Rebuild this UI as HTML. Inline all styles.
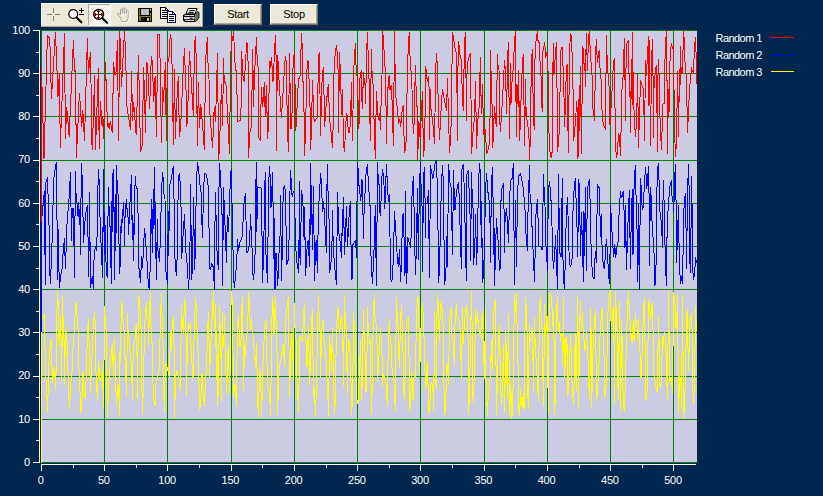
<!DOCTYPE html>
<html><head><meta charset="utf-8"><title>Plot</title>
<style>
html,body{margin:0;padding:0;}
body{width:823px;height:496px;background:#01274f;overflow:hidden;position:relative;font-family:"Liberation Sans",sans-serif;font-size:11px;}
#tb{position:absolute;left:41px;top:3px;width:162px;height:24px;background:#ece9d8;}
.btn{position:absolute;top:4px;height:21px;width:48px;box-sizing:border-box;background:#ece9d8;border-top:1px solid #fff;border-left:1px solid #fff;border-right:1px solid #716f64;border-bottom:1px solid #716f64;box-shadow:inset -1px -1px 0 #aca899;color:#000;text-align:center;line-height:18px;font-size:11px;letter-spacing:-0.3px;}
svg{position:absolute;left:0;top:0;}
svg text{font-family:"Liberation Sans",sans-serif;font-size:11px;fill:#fff;}
</style></head><body>
<svg width="823" height="496" viewBox="0 0 823 496">
<rect x="41" y="30" width="656" height="433" fill="#cbcce4"/>
<g stroke="#008000" stroke-width="1" shape-rendering="crispEdges"><line x1="41" y1="30.5" x2="697" y2="30.5"/><line x1="41" y1="73.5" x2="697" y2="73.5"/><line x1="41" y1="116.5" x2="697" y2="116.5"/><line x1="41" y1="160.5" x2="697" y2="160.5"/><line x1="41" y1="203.5" x2="697" y2="203.5"/><line x1="41" y1="246.5" x2="697" y2="246.5"/><line x1="41" y1="289.5" x2="697" y2="289.5"/><line x1="41" y1="332.5" x2="697" y2="332.5"/><line x1="41" y1="376.5" x2="697" y2="376.5"/><line x1="41" y1="419.5" x2="697" y2="419.5"/><line x1="41" y1="462.5" x2="697" y2="462.5"/><line x1="41.5" y1="30" x2="41.5" y2="463"/><line x1="104.5" y1="30" x2="104.5" y2="463"/><line x1="167.5" y1="30" x2="167.5" y2="463"/><line x1="231.5" y1="30" x2="231.5" y2="463"/><line x1="294.5" y1="30" x2="294.5" y2="463"/><line x1="357.5" y1="30" x2="357.5" y2="463"/><line x1="420.5" y1="30" x2="420.5" y2="463"/><line x1="484.5" y1="30" x2="484.5" y2="463"/><line x1="547.5" y1="30" x2="547.5" y2="463"/><line x1="610.5" y1="30" x2="610.5" y2="463"/><line x1="673.5" y1="30" x2="673.5" y2="463"/></g>
<g fill="none" stroke-width="1" shape-rendering="crispEdges" stroke-linejoin="bevel">
<polyline stroke="#ff0000" points="41.5,68.1 44.0,158.8 47.4,35.4 48.4,37.1 49.4,37.6 50.2,49.4 51.4,99.3 55.4,32.3 56.3,52.1 58.0,96.7 59.4,72.8 60.3,147.5 64.5,33.1 65.4,139.4 66.7,107.4 67.8,119.4 69.1,136.5 73.4,40.3 74.5,72.1 75.4,70.5 76.4,157.5 79.4,93.1 80.1,102.0 81.7,127.4 82.8,110.0 84.5,140.8 87.4,38.4 88.4,74.1 90.5,52.3 92.1,150.1 93.7,111.4 94.4,74.8 95.5,149.5 98.4,68.1 99.2,148.5 100.4,100.7 102.2,127.4 102.8,116.7 103.5,138.8 105.5,62.5 107.5,127.4 108.2,122.7 109.2,129.4 110.4,120.7 112.4,133.4 113.5,62.5 114.8,74.8 115.9,74.1 117.5,40.3 118.5,141.4 119.8,30.9 121.5,86.8 124.5,30.5 125.5,50.7 126.9,106.7 130.5,130.1 131.6,71.0 132.5,120.7 133.6,102.0 136.2,135.4 138.5,55.4 140.5,151.5 142.2,145.5 143.6,67.0 145.6,132.8 146.5,62.5 147.6,63.4 149.6,109.0 151.3,56.1 152.4,61.4 153.7,102.0 155.1,76.1 156.4,136.5 157.8,34.7 159.4,34.0 160.4,72.1 161.4,142.8 162.7,86.8 163.4,102.0 165.4,62.1 166.3,140.8 167.4,58.7 168.7,62.1 170.3,34.0 171.4,39.4 172.1,67.4 173.4,144.8 174.5,69.2 175.4,138.8 176.7,103.4 178.3,76.1 179.4,136.5 180.7,126.7 183.4,65.4 184.5,48.0 185.2,70.8 185.8,71.4 186.4,126.7 187.4,122.7 189.4,51.0 193.4,116.1 194.4,46.7 195.4,36.0 196.4,64.1 197.4,145.5 198.4,82.1 199.5,128.1 200.8,104.0 203.5,136.8 204.4,150.4 205.5,66.1 206.4,47.4 207.5,37.1 208.1,66.8 208.8,67.4 209.5,108.7 211.7,136.8 212.6,147.5 214.2,107.4 215.5,122.1 217.5,53.1 218.6,159.5 219.5,146.8 220.8,106.0 221.5,84.1 222.6,126.1 223.5,58.1 224.2,80.1 226.5,86.8 226.9,102.0 229.5,153.9 230.6,65.2 231.5,34.7 232.5,41.4 233.5,30.9 234.5,51.4 235.3,70.1 236.6,70.8 237.5,122.1 240.9,120.1 241.6,51.0 242.2,62.8 243.2,78.8 244.2,81.5 245.6,63.4 246.5,42.0 247.6,44.0 248.2,68.1 248.6,158.2 249.6,133.4 251.6,125.4 252.5,49.1 253.2,77.5 253.6,106.7 254.3,78.1 255.6,53.4 256.5,37.1 257.3,65.4 258.0,66.8 258.5,137.4 260.4,140.8 261.3,86.8 262.7,107.4 264.3,82.1 265.3,117.4 266.4,84.8 267.6,139.4 268.7,119.4 269.4,60.7 270.3,68.1 271.4,57.4 272.3,70.1 273.0,81.5 274.4,55.4 275.4,35.0 276.0,54.7 276.4,150.8 277.4,55.4 278.3,64.1 279.0,80.1 281.4,118.1 283.8,80.1 284.5,66.8 285.4,56.1 286.3,61.4 287.4,129.4 288.5,151.5 289.4,53.1 291.0,129.4 292.1,111.4 292.7,77.5 293.4,57.4 294.5,52.7 295.8,131.4 298.1,86.8 298.8,78.1 299.8,78.8 300.5,69.4 301.4,33.1 302.5,50.1 303.0,81.5 303.7,82.8 304.5,155.7 305.4,135.4 306.8,73.4 307.4,60.1 308.4,62.1 308.8,78.8 309.7,79.5 310.5,149.5 311.5,131.4 312.4,80.1 314.1,121.4 317.5,117.4 318.4,56.7 319.5,52.1 320.5,135.7 322.2,75.4 323.5,67.0 324.6,126.7 326.4,102.0 328.4,84.1 329.5,118.1 331.1,132.8 332.4,147.5 333.2,125.4 334.2,63.4 335.5,51.4 336.5,45.1 337.3,54.7 337.9,55.4 338.5,133.4 339.5,52.1 340.2,68.1 340.9,89.5 341.5,115.4 342.5,89.2 343.5,144.1 344.6,152.4 345.5,126.1 346.9,112.7 347.5,122.7 348.6,132.8 349.8,131.4 350.9,106.7 351.3,82.1 352.5,140.8 353.6,74.1 354.5,54.1 355.6,43.0 356.2,74.8 357.3,76.1 358.9,129.4 360.0,78.1 361.3,70.1 362.2,109.4 363.6,72.1 364.3,81.5 365.2,86.1 365.6,104.0 366.0,84.1 366.7,49.4 367.6,32.0 368.3,62.8 368.9,74.1 370.4,140.8 371.3,49.1 372.0,71.4 372.7,72.8 374.3,129.4 375.3,158.8 376.4,90.8 377.4,106.7 378.3,120.1 379.4,113.4 380.7,129.8 381.4,78.1 382.0,76.1 382.4,30.9 383.4,38.0 384.0,50.1 384.7,66.8 385.6,67.4 386.4,143.7 387.1,112.0 388.4,77.5 389.6,75.0 390.0,89.5 391.4,85.2 392.1,102.0 393.4,145.5 394.5,30.9 395.1,69.4 396.1,100.7 397.4,108.0 398.5,124.1 399.7,118.7 400.7,126.7 402.1,110.7 403.1,105.4 403.7,128.8 404.8,152.5 406.1,140.8 407.4,73.4 408.4,41.4 409.4,32.0 409.8,56.1 410.5,56.7 410.9,70.8 411.7,71.4 412.5,117.4 413.8,133.8 415.4,65.2 416.1,88.8 416.8,89.5 417.7,159.8 418.8,120.7 420.1,138.1 421.5,112.7 422.4,90.8 423.5,156.6 424.8,141.4 425.5,66.1 426.4,70.8 427.2,82.1 428.4,76.1 429.1,88.8 429.5,139.7 430.4,89.2 430.8,107.4 432.8,122.1 434.6,143.5 435.5,76.1 436.4,53.1 437.2,64.1 438.8,122.7 439.5,139.7 441.5,102.0 442.4,89.2 444.8,102.0 446.5,110.7 447.5,78.1 449.5,152.5 450.9,134.1 451.8,78.1 452.5,32.0 453.5,37.4 454.5,44.7 455.5,51.8 456.6,52.7 457.5,140.8 458.2,41.1 459.3,46.7 460.0,55.4 460.9,55.8 462.9,105.4 463.6,110.7 464.2,52.1 465.3,32.0 466.0,77.5 466.5,120.7 466.9,74.1 468.2,59.4 469.6,54.7 470.5,53.1 471.6,153.5 472.9,132.8 474.3,119.4 475.6,81.2 476.5,148.8 477.6,122.7 478.9,111.4 479.6,89.5 480.4,56.7 481.3,114.0 482.4,84.1 483.7,134.8 485.1,128.8 486.7,153.5 488.0,150.1 489.1,144.8 490.0,120.7 490.4,50.1 491.1,73.4 491.8,74.1 492.3,147.5 493.4,138.8 494.4,106.0 496.3,127.4 497.4,54.1 498.3,69.4 499.0,70.1 499.8,121.4 500.4,131.7 502.1,105.4 503.4,82.1 504.5,59.8 505.4,70.5 506.7,114.0 507.4,60.1 508.5,42.0 509.4,139.4 510.5,63.0 511.0,104.7 511.4,85.5 512.1,81.5 513.4,66.1 514.3,45.1 515.4,30.5 515.8,82.8 516.4,137.4 516.8,84.1 517.4,86.8 518.1,106.7 518.5,70.1 519.7,140.8 520.8,105.4 521.7,82.1 522.5,62.1 523.4,54.1 524.5,146.4 525.7,78.8 526.1,114.0 527.4,122.1 528.8,132.8 529.7,159.5 530.8,116.7 531.2,63.4 532.4,49.1 532.8,80.8 533.5,120.7 534.5,130.4 535.1,48.3 536.4,37.4 537.5,30.9 538.1,42.0 539.1,42.4 539.5,52.7 540.1,62.8 540.8,63.0 541.2,86.8 542.2,112.4 542.8,51.4 543.5,50.7 544.4,42.0 545.2,48.0 545.8,58.1 546.4,52.7 547.2,53.1 548.4,79.2 548.8,129.4 550.2,155.5 551.1,157.5 552.2,151.5 553.2,43.4 553.8,75.4 554.6,66.8 555.5,51.4 556.5,42.0 556.9,72.8 557.5,151.5 558.9,138.1 559.8,116.7 560.2,72.1 561.1,48.0 562.5,47.4 562.9,66.1 563.5,66.8 564.5,126.7 565.5,104.7 566.2,73.4 567.1,64.1 567.5,108.0 568.5,152.8 569.3,63.0 569.8,46.7 570.5,33.1 571.6,38.0 572.0,52.1 572.6,52.7 573.6,140.5 574.9,128.8 576.0,112.7 576.9,101.4 578.0,158.8 579.2,88.1 579.6,131.4 580.2,66.1 581.6,153.5 582.5,46.0 583.6,50.7 584.0,63.8 584.9,64.1 585.3,86.8 586.3,33.1 586.9,52.1 587.6,70.8 588.3,41.4 589.3,30.9 590.4,53.1 591.3,66.1 592.0,74.8 592.7,106.7 594.7,120.5 595.3,64.1 596.3,39.0 597.0,54.7 597.6,63.4 598.3,54.1 599.4,50.1 600.0,68.1 600.7,68.8 602.3,119.4 604.0,126.1 605.6,129.4 606.3,35.0 607.0,55.4 607.6,56.1 608.3,84.8 609.0,85.5 610.0,124.5 611.4,102.0 612.7,78.1 613.4,62.1 614.5,58.1 615.4,146.1 616.7,158.2 617.7,148.1 618.5,132.8 619.4,136.8 620.5,155.5 621.4,115.4 622.1,85.5 623.4,73.4 624.3,38.0 625.0,80.1 625.4,121.4 625.8,80.8 626.4,45.4 627.4,42.0 628.5,40.0 629.0,73.4 629.7,74.1 630.5,133.4 631.4,58.7 632.1,104.7 632.5,32.0 633.0,72.1 633.7,72.8 634.1,120.1 635.7,136.5 636.8,111.4 637.7,74.1 638.4,147.5 639.7,111.4 640.4,80.1 643.5,89.5 644.5,140.8 645.5,60.1 646.1,76.1 647.7,54.7 648.4,36.0 648.8,106.0 649.2,40.0 649.7,78.8 650.5,145.5 651.5,66.1 652.4,39.0 653.1,81.5 653.5,138.1 653.9,89.5 654.6,78.8 655.5,70.1 656.4,65.4 657.5,151.7 657.9,78.8 658.6,59.0 659.2,78.8 660.2,126.1 661.5,149.5 662.8,104.0 664.2,103.4 664.6,84.1 665.2,48.0 666.5,30.5 667.1,89.5 667.5,153.5 668.2,89.2 668.9,118.1 670.2,52.7 671.5,43.0 672.5,49.4 673.1,45.4 673.8,73.4 674.5,128.8 675.5,156.8 676.6,139.4 677.5,70.8 678.6,136.8 679.3,69.4 679.8,102.0 680.5,46.0 681.2,73.4 682.2,72.1 683.2,45.4 683.6,30.9 684.5,44.0 685.2,68.1 685.8,68.8 686.5,84.1 687.6,132.5 688.5,108.7 690.2,81.5 691.6,67.0 692.2,70.8 693.6,73.4 694.3,48.7 695.6,37.1 696.3,62.1 696.5,84.1"/>
<polyline stroke="#0000ff" points="41.6,220.8 44.4,190.7 45.3,284.8 46.0,182.1 47.4,177.4 48.0,194.1 48.7,194.4 49.4,263.4 50.4,283.5 51.8,251.4 53.1,202.1 54.0,177.4 55.4,167.4 56.4,162.0 57.0,219.5 57.4,279.5 57.8,220.2 59.4,288.2 60.7,276.1 62.1,268.1 63.4,248.7 64.5,238.0 65.4,269.4 66.7,232.0 67.4,214.8 68.5,208.1 69.4,193.0 70.5,172.0 71.0,206.8 71.7,241.4 72.1,207.7 72.7,217.5 73.4,208.5 74.5,277.5 75.4,171.1 76.1,196.1 76.8,196.8 77.4,215.5 78.5,202.1 79.0,216.8 79.8,208.8 80.4,255.4 81.4,163.1 82.5,183.4 83.4,242.7 85.4,216.1 86.5,208.8 87.4,205.0 88.8,276.8 89.5,192.1 90.5,287.5 91.5,280.1 92.4,276.1 93.5,289.5 94.1,255.4 95.5,246.1 96.8,250.7 97.5,206.1 98.4,169.4 99.2,181.4 99.7,208.8 100.8,238.7 102.6,277.5 103.5,169.0 104.2,254.7 104.8,212.1 105.5,255.4 107.2,278.1 108.4,187.1 109.1,208.1 109.8,208.5 110.2,241.4 111.5,284.1 112.2,173.4 112.8,232.0 113.5,169.0 114.2,219.5 114.6,279.5 115.5,194.1 115.9,250.7 116.5,165.0 117.3,188.1 117.9,188.7 118.6,219.5 119.5,273.5 120.6,259.4 121.1,219.5 121.5,232.7 122.2,220.2 123.5,202.1 124.2,220.8 124.6,246.1 125.1,211.5 126.5,199.2 127.1,210.1 127.8,210.8 128.6,234.7 129.3,216.1 130.5,192.1 131.6,175.1 132.2,240.0 132.9,214.8 133.6,261.4 134.6,198.1 135.3,176.0 136.2,188.7 137.6,188.5 138.9,267.4 140.5,282.8 141.6,256.1 142.6,268.1 143.6,244.0 144.7,228.0 146.9,259.4 148.3,284.1 149.3,289.5 150.4,262.1 151.3,199.4 152.4,253.4 153.3,189.4 154.0,229.3 154.4,167.1 155.1,206.8 156.4,280.1 157.4,219.2 158.0,250.7 159.6,262.1 161.4,198.1 162.4,172.0 163.4,180.1 164.0,194.1 165.0,199.4 166.0,272.1 167.4,283.5 168.3,210.8 168.7,256.1 169.6,186.1 170.7,181.4 172.1,173.4 173.4,166.3 174.1,203.4 174.5,252.7 176.3,276.1 177.4,250.7 178.3,177.4 179.4,173.0 180.1,182.1 180.7,182.7 181.7,259.0 183.4,229.3 184.5,214.1 185.8,251.4 187.4,266.8 188.5,289.5 189.8,266.8 190.5,184.1 191.7,280.1 192.8,258.8 193.4,197.0 194.8,270.1 196.4,186.1 197.4,162.3 198.4,168.0 199.2,176.0 199.9,184.7 200.8,185.4 202.4,238.0 203.5,194.1 204.4,173.4 205.5,173.0 206.4,175.4 207.5,180.1 208.1,186.1 208.8,186.7 209.2,266.8 210.4,270.1 211.9,263.4 213.1,266.8 214.6,289.5 215.2,192.1 215.9,210.8 216.8,248.1 218.4,270.1 219.2,163.1 220.2,172.0 220.8,188.1 221.8,188.5 222.6,286.2 223.5,187.4 224.2,204.1 226.5,263.4 227.3,215.2 228.2,232.0 229.5,207.5 230.2,182.1 231.1,169.4 231.8,203.4 232.5,204.1 232.9,246.7 234.2,288.2 235.5,277.5 236.9,257.4 237.5,238.7 238.5,251.4 239.8,242.7 242.2,236.7 244.2,200.8 245.6,193.0 246.5,252.7 247.8,252.1 249.6,243.4 250.5,214.1 252.2,252.1 253.2,280.1 254.9,266.8 255.6,193.8 256.5,162.3 256.9,232.0 257.3,186.7 258.0,187.4 261.3,188.1 262.7,282.8 264.0,232.0 264.4,198.1 265.3,172.0 266.0,254.7 267.6,282.8 268.4,195.4 269.4,166.0 270.3,177.4 271.0,207.5 271.6,200.8 272.4,172.0 273.0,202.1 273.4,258.8 273.8,202.8 275.0,289.5 276.0,252.7 277.0,270.8 277.8,285.5 278.7,258.1 280.0,237.4 280.4,195.2 281.7,280.8 282.7,214.1 283.4,188.7 284.5,185.4 285.4,191.4 286.7,265.4 287.8,260.8 288.7,259.4 289.4,216.1 290.5,170.3 291.4,184.1 292.1,196.8 293.4,191.4 294.3,194.1 296.1,254.1 297.4,266.8 298.8,272.8 299.4,181.0 299.8,254.7 300.5,265.4 301.4,190.1 302.5,198.1 303.4,211.5 304.1,240.0 304.5,206.8 305.7,275.5 306.8,250.7 308.1,240.0 309.7,267.4 310.4,163.1 310.8,234.7 311.2,185.4 311.9,218.1 312.4,250.1 313.5,186.1 314.5,280.8 315.5,250.7 316.1,240.0 317.5,272.8 318.4,208.1 319.5,196.1 320.5,173.0 321.5,182.7 322.2,203.4 322.8,212.1 323.5,201.4 324.2,210.1 326.4,253.4 327.2,164.0 328.2,196.8 328.8,197.4 329.5,272.8 330.8,266.8 332.2,237.4 332.6,210.1 333.2,248.1 334.8,267.4 336.5,284.8 337.5,192.1 338.2,211.5 338.9,233.4 340.2,242.0 341.5,257.7 342.5,209.5 342.9,236.0 343.5,197.0 344.5,254.7 346.5,206.1 347.5,247.4 349.3,210.8 350.5,201.0 350.9,241.4 352.0,280.1 352.9,244.7 355.6,240.0 356.6,258.1 357.3,162.0 358.2,170.0 358.9,185.4 359.6,185.8 360.2,198.1 360.9,200.8 361.6,179.1 362.5,182.1 362.9,210.8 363.6,238.7 364.3,196.1 364.9,196.8 365.6,177.4 366.5,169.4 367.6,164.0 368.3,185.4 368.9,186.1 369.3,204.8 370.4,206.1 371.1,262.8 372.4,283.5 373.7,259.4 374.7,229.3 375.3,204.8 376.4,286.2 377.6,162.3 378.4,184.1 379.1,184.7 379.8,211.5 380.4,215.5 381.4,192.1 382.3,169.0 383.4,174.7 384.0,185.4 384.7,208.8 385.4,196.8 386.4,164.0 387.4,182.7 388.0,195.4 388.7,202.1 389.6,194.1 390.0,236.7 390.7,279.5 391.7,282.1 392.7,274.1 393.8,241.4 394.5,211.2 397.4,258.8 398.5,267.4 399.4,249.4 400.7,281.5 401.8,248.1 402.5,214.8 403.4,213.1 405.0,276.1 405.4,191.1 405.8,237.4 406.8,284.4 407.7,237.4 410.8,247.4 412.1,192.1 413.4,176.0 415.4,274.5 416.5,246.1 417.4,188.1 418.4,260.4 419.2,200.5 420.4,160.7 421.2,190.7 421.9,191.4 422.5,272.4 423.5,177.4 424.5,167.1 425.1,203.4 425.5,238.0 425.9,204.1 427.5,203.4 428.4,190.1 429.5,277.5 430.5,165.4 431.5,171.4 432.8,179.1 433.9,171.4 435.1,163.3 436.4,160.4 436.8,175.4 437.5,185.4 438.6,282.5 439.5,269.4 441.2,193.4 442.4,165.0 443.2,178.7 444.6,284.8 445.9,271.4 446.9,236.0 447.5,266.8 448.5,164.0 449.5,175.4 450.2,186.1 451.1,186.7 452.5,255.4 453.5,170.0 454.2,193.4 454.9,210.1 455.5,209.5 456.2,192.8 457.5,186.1 458.5,182.3 459.1,194.8 459.8,216.8 460.6,248.1 461.6,268.8 462.0,169.4 463.3,164.0 464.0,182.1 464.9,216.1 465.6,256.1 466.5,280.8 466.9,174.0 468.5,170.0 469.2,193.4 469.8,193.8 470.5,260.8 471.6,172.0 472.2,196.8 472.9,197.4 473.6,264.8 474.9,242.7 475.6,214.1 476.5,264.8 477.6,240.0 478.3,186.1 479.6,163.1 480.4,175.1 481.3,248.1 481.7,200.8 482.4,282.8 483.3,277.5 484.3,252.7 485.3,203.4 486.3,173.0 487.1,181.4 487.8,192.1 488.4,192.8 489.0,200.1 489.8,200.8 490.4,262.8 491.4,188.5 492.4,167.1 493.0,197.0 493.4,255.4 493.8,197.4 494.4,285.7 495.4,260.1 496.4,218.4 498.0,240.0 499.6,271.4 500.3,266.8 501.1,192.5 502.5,186.1 503.7,183.1 504.1,216.8 504.5,252.7 505.1,217.5 506.5,208.5 507.1,216.8 508.5,242.7 509.4,203.4 510.5,181.0 512.1,178.3 513.4,163.1 514.5,284.8 515.4,200.5 516.5,267.4 517.4,198.1 518.5,175.1 519.7,175.4 520.5,173.0 521.4,178.0 522.8,184.1 523.7,196.8 524.5,197.4 526.1,236.0 527.4,251.4 528.1,207.5 529.5,165.0 530.1,198.1 530.8,198.8 533.5,260.1 534.5,281.7 535.5,235.4 536.1,210.8 537.5,199.2 538.8,246.1 540.8,246.7 542.2,250.1 543.5,174.0 544.2,192.1 544.8,192.8 545.5,237.4 546.8,258.8 547.5,270.8 548.2,200.8 549.2,181.0 550.2,188.7 550.8,200.1 551.5,200.8 552.6,254.7 553.5,268.8 554.8,252.7 555.5,235.4 557.5,288.8 558.5,174.0 559.1,214.1 559.8,252.7 561.1,257.4 561.5,218.8 562.5,178.0 563.1,274.8 564.5,288.8 565.5,252.7 566.2,218.8 567.5,197.0 569.3,261.4 570.6,267.4 572.0,259.4 573.2,202.1 574.2,188.1 575.3,178.3 576.0,198.1 576.6,206.1 577.6,257.4 578.9,179.1 579.6,199.4 580.5,255.8 581.6,212.1 582.6,256.1 583.6,281.7 584.0,210.8 584.7,256.1 585.6,187.1 586.5,271.4 587.3,191.4 588.5,182.7 589.6,179.1 590.4,216.8 591.3,257.4 592.7,276.8 594.3,278.8 595.3,250.7 596.4,262.8 597.4,184.1 598.3,186.7 599.4,188.1 600.0,215.5 600.7,237.4 601.4,214.1 602.3,258.8 604.4,269.4 605.4,254.1 606.3,239.4 607.4,250.7 608.7,277.5 609.8,283.5 610.4,202.1 612.7,244.0 613.8,257.4 614.7,244.0 615.7,258.1 616.7,248.1 618.5,240.0 619.1,210.8 620.5,191.1 621.4,198.1 622.1,196.8 623.1,191.1 623.7,203.4 624.5,219.5 625.0,248.1 625.4,204.8 626.5,269.7 628.4,210.1 629.4,190.1 630.4,268.8 631.4,208.8 632.5,189.4 633.0,254.7 634.1,182.7 635.4,165.0 635.8,194.8 636.5,195.4 637.8,281.5 638.8,204.1 639.5,289.5 640.4,178.0 641.2,186.7 641.9,204.1 642.8,209.5 643.5,203.4 644.4,184.1 645.5,167.1 646.1,174.7 646.8,188.7 647.5,181.4 648.4,166.3 649.1,196.8 649.5,265.7 650.4,187.1 651.2,198.1 651.9,219.5 654.2,256.1 654.8,285.7 655.8,281.5 657.2,172.7 658.4,163.1 659.1,182.7 659.8,211.5 660.8,213.5 661.5,236.0 662.2,214.1 662.6,247.8 663.2,180.1 663.9,195.4 665.5,266.8 666.5,285.7 667.3,211.5 668.2,210.8 669.5,189.4 670.6,183.1 671.5,180.1 672.2,201.4 673.1,202.1 673.8,211.5 674.5,180.1 675.5,164.0 676.2,212.8 676.6,263.4 678.5,205.0 679.3,264.1 680.6,283.5 681.6,276.1 682.2,283.5 683.2,248.1 684.2,199.4 685.6,193.0 686.5,269.4 687.6,189.4 688.5,164.0 689.2,192.1 689.6,256.1 690.5,272.8 691.6,176.0 692.2,215.5 692.6,268.1 693.6,280.1 694.9,269.4 695.6,257.4 696.5,263.4"/>
<polyline stroke="#ffff00" points="42.7,318.7 43.6,315.4 44.4,314.1 44.9,340.8 45.3,367.4 46.7,392.1 47.6,412.5 48.7,367.4 50.4,341.5 51.4,339.5 52.4,383.4 54.4,367.4 55.8,390.4 56.4,339.5 57.4,290.4 58.3,304.0 59.0,338.8 59.6,345.5 60.4,316.3 61.1,338.8 61.7,381.4 62.5,296.3 63.1,319.4 63.8,319.8 64.5,384.7 65.4,337.5 66.5,327.4 67.1,344.1 68.1,376.7 69.4,409.5 70.7,384.7 72.1,371.4 73.4,338.1 74.5,329.4 75.4,306.0 76.4,301.1 77.0,315.4 77.7,315.8 78.4,341.5 78.8,364.7 80.1,394.1 81.0,412.5 82.1,398.1 83.0,371.4 84.1,392.8 85.4,399.4 86.5,367.4 87.4,336.1 88.4,318.5 90.5,392.8 91.5,367.4 93.2,331.4 94.4,312.1 95.2,323.0 96.1,378.1 97.5,400.8 98.4,360.7 100.1,380.7 102.6,371.4 103.5,408.1 104.6,306.0 105.2,320.1 105.9,320.3 106.6,382.7 107.5,416.6 108.8,381.4 110.2,366.0 112.4,343.1 113.5,377.4 114.4,337.5 115.9,388.8 116.6,405.5 117.5,384.7 118.6,386.7 119.5,416.6 120.2,329.4 120.6,362.0 121.3,300.3 122.2,306.0 122.9,319.0 123.8,319.4 124.2,340.8 125.5,366.7 126.5,396.8 127.5,314.1 128.2,335.4 128.9,335.8 131.6,370.7 132.5,400.8 133.2,344.1 134.9,341.5 136.2,323.0 136.9,346.8 137.6,399.4 138.5,295.4 139.6,301.1 140.2,312.1 140.9,312.5 141.3,364.7 142.5,413.5 143.6,379.4 144.3,337.5 145.3,313.1 146.5,302.4 147.2,320.1 148.0,320.3 148.5,345.5 149.6,309.4 150.4,292.3 151.1,328.8 151.7,329.4 153.3,396.8 155.1,406.4 156.0,384.7 159.1,370.0 160.4,324.1 161.4,294.0 162.0,315.4 162.7,315.8 163.4,383.4 164.4,411.5 165.4,362.0 166.7,365.4 169.6,377.4 170.4,332.1 171.1,350.2 172.1,329.4 173.4,316.1 174.1,349.5 174.5,418.2 175.4,385.4 176.3,370.0 179.4,380.7 180.5,391.4 181.4,306.4 182.1,322.1 182.7,322.8 183.4,334.1 184.5,299.4 185.2,304.0 185.8,304.7 186.4,396.5 187.4,342.1 188.5,323.4 189.2,328.1 189.7,326.1 190.5,323.4 191.0,345.5 193.0,379.4 194.5,321.4 195.4,298.4 196.4,308.0 196.8,327.4 197.4,328.1 197.8,342.1 198.8,378.7 199.7,410.1 200.8,399.4 202.1,372.7 203.5,398.1 204.5,405.5 205.5,383.4 206.4,368.7 207.5,337.5 208.4,311.4 209.1,345.5 209.5,377.4 211.2,334.8 212.4,311.4 213.5,291.3 214.2,328.1 214.8,328.8 215.5,304.0 216.4,380.1 216.8,331.0 217.5,406.4 218.4,388.8 219.5,306.4 220.2,330.8 220.8,338.8 221.5,401.4 222.4,312.3 223.1,345.5 223.8,346.1 224.4,315.4 226.5,393.4 227.5,368.7 228.2,345.5 229.8,393.4 230.6,317.1 231.5,290.9 232.5,304.0 233.5,397.4 234.5,384.1 235.3,387.4 236.5,405.5 237.3,331.4 238.5,315.4 239.1,330.8 239.8,346.8 240.9,346.1 241.6,311.4 242.6,296.3 243.6,391.4 244.0,344.8 244.6,367.4 245.3,347.5 246.9,334.1 247.6,332.1 248.5,292.3 249.6,305.1 250.2,328.8 250.9,329.2 251.6,317.1 252.2,334.1 252.9,334.8 255.6,366.7 256.5,343.5 257.6,399.4 258.5,417.5 259.6,366.7 260.7,382.1 261.7,414.1 262.7,370.0 264.4,332.1 265.3,320.1 266.3,323.4 267.4,384.7 268.7,388.8 269.6,396.1 270.7,415.5 271.4,345.5 272.4,297.1 273.4,307.4 274.0,334.8 274.7,315.4 275.6,296.3 276.0,320.7 276.7,321.4 277.6,413.5 278.7,378.1 279.8,364.7 283.4,344.1 284.5,366.7 285.4,325.4 286.3,314.1 287.4,302.4 288.5,296.3 289.0,346.8 289.4,396.8 291.4,333.4 292.7,345.5 293.4,380.7 294.3,303.4 295.0,326.1 295.7,326.5 296.8,374.0 297.8,396.8 298.8,412.5 299.4,336.1 302.5,342.1 303.4,318.5 304.4,303.4 305.0,334.1 305.7,334.5 307.0,366.7 307.7,346.1 308.5,326.1 309.7,384.5 311.2,328.1 312.4,309.1 313.5,397.4 314.4,387.4 315.5,416.6 316.4,386.7 317.5,336.1 318.4,295.0 319.2,319.4 319.9,319.8 320.5,378.3 321.5,335.4 322.4,320.1 323.1,321.4 323.8,338.1 324.4,338.8 326.4,366.7 327.5,384.7 328.6,416.6 329.5,335.0 330.2,345.5 331.5,371.4 332.4,328.1 334.2,400.8 334.8,414.4 335.8,374.0 336.2,337.5 337.5,310.1 338.6,307.4 339.1,333.4 339.8,334.1 340.2,327.4 341.5,315.4 342.2,327.4 342.9,341.5 343.5,386.1 344.5,295.4 345.1,315.4 345.8,315.8 347.5,392.8 348.2,339.1 349.1,341.5 349.8,342.8 350.9,378.7 351.8,414.8 352.9,375.4 353.6,311.0 354.2,326.1 354.9,326.5 356.2,385.4 356.9,399.4 358.0,403.5 358.9,387.4 359.6,367.4 360.5,340.1 361.6,400.1 362.6,370.0 363.3,311.0 364.0,332.1 364.7,332.8 365.6,391.4 366.5,391.7 367.6,307.0 368.3,334.1 368.9,334.5 369.6,344.1 370.4,340.1 371.1,392.1 371.7,413.5 373.3,314.7 374.4,294.0 375.1,318.1 375.7,318.5 376.3,327.4 377.0,341.5 377.6,382.1 380.4,328.1 381.1,337.5 381.8,338.1 382.4,387.1 383.4,374.0 386.0,384.1 387.4,405.5 388.3,340.1 389.4,318.1 390.0,337.2 390.7,337.7 392.1,370.0 393.8,380.7 394.7,397.4 395.4,411.7 396.3,297.1 397.1,312.1 397.8,312.7 398.3,340.1 399.4,368.4 400.5,321.4 401.4,305.1 402.1,322.1 402.7,322.5 403.4,386.1 404.5,401.4 406.1,327.4 407.4,320.1 408.5,316.1 409.7,411.7 410.8,396.1 411.7,370.7 413.0,400.1 414.1,374.7 415.4,377.4 416.4,320.1 417.4,298.0 418.5,296.3 419.1,334.1 419.7,374.0 420.8,333.4 421.5,315.4 422.4,303.0 423.1,314.7 423.7,315.4 424.1,342.8 425.5,390.1 426.4,382.7 427.2,360.7 428.1,386.1 429.1,413.5 430.1,401.4 431.1,382.7 432.8,384.7 433.8,411.5 434.4,311.0 434.8,371.4 436.4,389.4 437.2,294.0 438.2,301.1 438.8,324.1 439.5,341.5 440.2,311.4 441.5,300.0 442.2,311.4 442.8,311.8 443.2,333.4 443.9,381.4 444.6,415.7 445.8,404.8 446.5,367.4 447.5,363.4 448.5,384.5 449.5,322.1 450.6,312.1 451.5,307.0 451.9,333.4 452.6,334.1 454.5,365.4 455.1,319.4 456.5,303.4 457.1,319.0 458.2,319.4 458.9,322.1 459.8,323.0 461.6,379.4 462.5,307.0 463.2,344.1 464.2,327.4 465.3,312.1 466.5,305.1 467.2,311.4 467.8,311.8 468.6,413.5 469.6,392.1 470.5,338.1 471.6,291.3 472.2,334.1 472.6,390.1 473.3,403.7 474.3,379.4 475.6,308.0 476.3,323.4 476.9,323.0 477.6,311.4 478.3,326.1 478.9,326.8 479.6,332.1 480.4,337.5 481.3,323.0 482.4,311.4 483.1,344.1 484.7,379.4 485.3,308.0 486.0,382.1 487.4,415.7 488.3,394.1 489.6,386.1 490.7,366.0 491.4,341.5 492.3,370.0 493.4,320.7 494.4,302.0 495.6,299.4 496.3,414.8 497.4,380.7 498.7,331.4 499.6,324.1 500.7,390.1 501.7,404.8 502.7,378.7 503.4,345.5 503.8,371.4 504.7,411.7 505.7,330.5 507.4,399.4 508.5,314.5 509.7,416.2 510.7,380.7 511.7,419.3 512.7,410.1 514.5,294.4 515.4,312.1 516.4,294.4 517.0,322.5 517.7,323.0 518.1,376.1 518.8,410.1 519.7,416.2 520.5,388.8 521.4,403.5 522.5,408.1 523.2,392.8 524.1,410.1 525.4,297.4 526.4,309.1 526.8,330.8 527.4,331.4 528.1,408.8 529.5,324.1 530.1,342.1 531.5,336.1 532.4,328.1 533.5,389.8 534.4,317.1 535.1,342.1 538.4,400.8 539.5,306.4 540.5,295.4 541.2,320.1 541.9,320.7 543.5,405.5 544.6,304.3 545.2,334.1 545.9,334.5 546.4,316.1 547.5,316.7 548.2,412.8 548.8,350.8 549.5,292.3 550.2,294.7 550.8,296.0 551.8,296.3 552.4,326.8 553.1,312.1 553.8,312.7 554.6,414.8 555.5,392.8 556.2,315.4 557.5,296.3 558.2,331.4 558.9,322.1 559.8,322.8 560.2,341.5 561.1,335.4 562.5,334.1 562.9,364.7 563.5,297.1 564.5,378.3 565.1,338.5 565.5,367.4 566.9,336.1 567.8,396.8 568.9,378.1 570.6,334.1 572.2,386.7 573.6,404.5 575.3,333.4 576.2,390.8 577.6,296.3 578.2,346.8 578.6,409.9 579.6,328.8 580.5,301.1 581.2,329.4 581.8,330.1 582.5,312.1 583.2,329.4 583.9,334.1 584.3,350.8 585.6,348.8 586.5,332.1 587.2,344.1 588.3,364.7 588.9,386.1 589.9,398.1 590.4,307.4 591.1,332.1 591.6,407.5 593.3,337.5 594.4,324.1 595.3,310.1 596.7,400.8 597.6,387.4 598.7,371.4 600.0,336.8 601.4,313.4 602.4,307.4 603.0,331.4 603.8,332.1 604.4,399.4 606.7,381.4 607.4,322.8 608.3,306.4 609.4,294.0 610.4,290.4 611.1,326.1 612.1,320.7 613.4,306.0 614.1,346.8 614.5,403.7 615.4,290.7 616.1,308.7 616.7,309.4 617.7,381.4 618.5,400.1 619.4,300.3 620.7,410.8 621.4,319.4 622.1,338.8 622.7,377.4 623.4,404.8 624.5,411.7 625.4,380.7 626.4,345.5 627.4,309.4 628.5,291.3 629.2,310.1 629.8,310.7 630.5,337.5 631.4,334.1 632.1,342.8 633.4,320.1 634.1,341.5 634.8,328.1 635.7,314.1 636.4,326.8 637.0,327.4 637.7,338.8 638.4,319.0 639.1,335.4 639.7,336.1 640.5,379.4 641.5,374.0 643.2,316.7 644.4,297.1 645.1,348.8 645.7,400.8 646.8,394.8 647.5,390.1 648.4,304.7 649.5,299.4 650.1,312.7 650.8,320.1 651.5,308.0 652.6,302.0 653.1,336.1 653.5,374.0 654.8,378.7 655.9,386.1 657.2,393.4 658.6,316.1 659.8,386.1 660.8,388.1 661.9,362.0 662.4,336.1 663.1,345.5 664.4,332.1 665.1,337.5 665.8,344.1 666.5,372.7 667.5,398.8 668.5,291.3 669.1,338.1 669.8,382.1 670.9,377.4 671.8,384.1 672.6,392.8 673.5,292.0 674.5,297.4 675.1,305.4 675.8,328.1 676.6,328.8 677.5,294.4 678.6,413.9 679.6,376.1 680.9,380.7 681.6,407.5 682.5,295.4 683.6,419.3 684.5,406.8 685.3,380.7 686.5,321.4 687.2,309.4 687.8,341.5 688.6,371.4 689.8,319.4 690.9,318.1 691.6,313.1 692.2,337.5 692.6,382.1 693.6,404.8 694.5,379.4 695.6,306.0 696.3,330.8"/>
<line x1="41.5" y1="68" x2="41.5" y2="221" stroke="#ff0000"/>
<line x1="41.5" y1="221" x2="41.5" y2="332" stroke="#0000ff"/>
<line x1="41.5" y1="332" x2="41.5" y2="463" stroke="#ffff00"/>
</g>
<g stroke="#fff" stroke-width="1" shape-rendering="crispEdges">
<line x1="39.5" y1="30" x2="39.5" y2="463"/>
<line x1="41" y1="464.5" x2="696" y2="464.5"/>
<line x1="33" y1="30.5" x2="40" y2="30.5"/><line x1="36" y1="52.5" x2="40" y2="52.5"/><line x1="33" y1="73.5" x2="40" y2="73.5"/><line x1="36" y1="95.5" x2="40" y2="95.5"/><line x1="33" y1="116.5" x2="40" y2="116.5"/><line x1="36" y1="138.5" x2="40" y2="138.5"/><line x1="33" y1="160.5" x2="40" y2="160.5"/><line x1="36" y1="181.5" x2="40" y2="181.5"/><line x1="33" y1="203.5" x2="40" y2="203.5"/><line x1="36" y1="224.5" x2="40" y2="224.5"/><line x1="33" y1="246.5" x2="40" y2="246.5"/><line x1="36" y1="268.5" x2="40" y2="268.5"/><line x1="33" y1="289.5" x2="40" y2="289.5"/><line x1="36" y1="311.5" x2="40" y2="311.5"/><line x1="33" y1="332.5" x2="40" y2="332.5"/><line x1="36" y1="354.5" x2="40" y2="354.5"/><line x1="33" y1="376.5" x2="40" y2="376.5"/><line x1="36" y1="397.5" x2="40" y2="397.5"/><line x1="33" y1="419.5" x2="40" y2="419.5"/><line x1="36" y1="440.5" x2="40" y2="440.5"/><line x1="33" y1="462.5" x2="40" y2="462.5"/><line x1="41.5" y1="464" x2="41.5" y2="471"/><line x1="73.5" y1="464" x2="73.5" y2="468"/><line x1="104.5" y1="464" x2="104.5" y2="471"/><line x1="136.5" y1="464" x2="136.5" y2="468"/><line x1="167.5" y1="464" x2="167.5" y2="471"/><line x1="199.5" y1="464" x2="199.5" y2="468"/><line x1="231.5" y1="464" x2="231.5" y2="471"/><line x1="262.5" y1="464" x2="262.5" y2="468"/><line x1="294.5" y1="464" x2="294.5" y2="471"/><line x1="326.5" y1="464" x2="326.5" y2="468"/><line x1="357.5" y1="464" x2="357.5" y2="471"/><line x1="389.5" y1="464" x2="389.5" y2="468"/><line x1="420.5" y1="464" x2="420.5" y2="471"/><line x1="452.5" y1="464" x2="452.5" y2="468"/><line x1="484.5" y1="464" x2="484.5" y2="471"/><line x1="515.5" y1="464" x2="515.5" y2="468"/><line x1="547.5" y1="464" x2="547.5" y2="471"/><line x1="579.5" y1="464" x2="579.5" y2="468"/><line x1="610.5" y1="464" x2="610.5" y2="471"/><line x1="642.5" y1="464" x2="642.5" y2="468"/><line x1="673.5" y1="464" x2="673.5" y2="471"/>
</g>
<g letter-spacing="-0.3"><text x="29.8" y="33.7" text-anchor="end">100</text><text x="29.8" y="76.9" text-anchor="end">90</text><text x="29.8" y="120.1" text-anchor="end">80</text><text x="29.8" y="163.3" text-anchor="end">70</text><text x="29.8" y="206.5" text-anchor="end">60</text><text x="29.8" y="249.7" text-anchor="end">50</text><text x="29.8" y="292.9" text-anchor="end">40</text><text x="29.8" y="336.1" text-anchor="end">30</text><text x="29.8" y="379.3" text-anchor="end">20</text><text x="29.8" y="422.5" text-anchor="end">10</text><text x="29.8" y="465.7" text-anchor="end">0</text><text x="40.6" y="483.7" text-anchor="middle">0</text><text x="103.8" y="483.7" text-anchor="middle">50</text><text x="167.1" y="483.7" text-anchor="middle">100</text><text x="230.3" y="483.7" text-anchor="middle">150</text><text x="293.6" y="483.7" text-anchor="middle">200</text><text x="356.8" y="483.7" text-anchor="middle">250</text><text x="420.0" y="483.7" text-anchor="middle">300</text><text x="483.3" y="483.7" text-anchor="middle">350</text><text x="546.5" y="483.7" text-anchor="middle">400</text><text x="609.8" y="483.7" text-anchor="middle">450</text><text x="673.0" y="483.7" text-anchor="middle">500</text></g>
<g letter-spacing="-0.55">
<text x="715.5" y="42">Random 1</text>
<text x="715.5" y="59">Random 2</text>
<text x="715.5" y="76">Random 3</text>
</g>
<g stroke-width="1" shape-rendering="crispEdges">
<line x1="771" y1="37.5" x2="794" y2="37.5" stroke="#ff0000"/>
<line x1="771" y1="54.5" x2="794" y2="54.5" stroke="#0000ff"/>
<line x1="771" y1="71.5" x2="794" y2="71.5" stroke="#ffff00"/>
</g>
</svg>
<div id="tb"></div>
<div class="btn" style="left:214px">Start</div>
<div class="btn" style="left:270px">Stop</div>
<svg width="823" height="496" viewBox="0 0 823 496"><!-- toolbar bevel -->
<g shape-rendering="crispEdges">
<rect x="41" y="3" width="162" height="1" fill="#ffffff"/>
<rect x="41" y="3" width="1" height="24" fill="#ffffff"/>
<rect x="41" y="26" width="162" height="1" fill="#aca899"/>
<rect x="202" y="3" width="1" height="24" fill="#aca899"/>
<!-- pressed button -->
<defs><pattern id="chk" x="0" y="0" width="2" height="2" patternUnits="userSpaceOnUse"><rect width="2" height="2" fill="#ece9d8"/><rect x="0" y="0" width="1" height="1" fill="#fff"/><rect x="1" y="1" width="1" height="1" fill="#fff"/></pattern></defs><rect x="88" y="4" width="23" height="22" fill="url(#chk)"/>
<rect x="88" y="4" width="23" height="1" fill="#aca899"/>
<rect x="88" y="4" width="1" height="22" fill="#aca899"/>
<rect x="88" y="25" width="23" height="1" fill="#ffffff"/>
<rect x="110" y="4" width="1" height="22" fill="#ffffff"/>
<!-- crosshair -->
<g fill="#808080">
<rect x="53" y="8" width="1" height="5"/><rect x="53" y="16" width="1" height="5"/>
<rect x="47" y="14" width="5" height="1"/><rect x="55" y="14" width="5" height="1"/>
</g>
<!-- plus/minus -->
<rect x="79" y="10" width="5" height="1" fill="#000"/><rect x="81" y="8" width="1" height="5" fill="#000"/>
<rect x="79" y="14" width="5" height="1" fill="#000"/>
<!-- save -->
<rect x="138" y="8" width="14" height="14" fill="#000"/>
<rect x="139" y="9" width="12" height="12" fill="#808000"/>
<rect x="141" y="9" width="8" height="6" fill="#c0c0c0"/>
<rect x="141" y="15" width="8" height="1" fill="#000"/>
<rect x="140" y="9" width="1" height="7" fill="#000"/>
<rect x="149" y="9" width="1" height="7" fill="#000"/>
<rect x="141" y="17" width="9" height="4" fill="#000"/>
<rect x="147" y="18" width="2" height="3" fill="#c0c0c0"/>
<rect x="150" y="9" width="1" height="1" fill="#fff"/>
<rect x="150" y="11" width="1" height="2" fill="#000"/>
<!-- copy back page -->
<path d="M160.5 7.5 H165.5 L168.5 10.5 V18.5 H160.5 Z" fill="#fff" stroke="#000" stroke-width="1"/>
<path d="M165.5 7.5 V10.5 H168.5" fill="none" stroke="#000" stroke-width="1"/>
<rect x="162" y="10" width="3" height="1" fill="#000"/>
<rect x="162" y="12" width="5" height="1" fill="#000"/>
<rect x="162" y="14" width="5" height="1" fill="#000"/>
<rect x="162" y="16" width="5" height="1" fill="#000"/>
<!-- copy front page -->
<path d="M167.5 11.5 H172.5 L175.5 14.5 V22.5 H167.5 Z" fill="#fff" stroke="#000080" stroke-width="1"/>
<path d="M172.5 11.5 V14.5 H175.5" fill="none" stroke="#000080" stroke-width="1"/>
<rect x="169" y="14" width="3" height="1" fill="#000"/>
<rect x="169" y="16" width="5" height="1" fill="#000"/>
<rect x="169" y="18" width="5" height="1" fill="#000"/>
<rect x="169" y="20" width="5" height="1" fill="#000"/>
</g>
<!-- magnifier 1 -->
<line x1="76.5" y1="17.5" x2="81.3" y2="22.3" stroke="#000" stroke-width="2.2" stroke-linecap="round"/>
<circle cx="73.2" cy="14" r="4.4" fill="#fff" stroke="#000" stroke-width="1.3"/>
<!-- magnifier 2 -->
<line x1="102.5" y1="18.2" x2="107" y2="22.8" stroke="#000" stroke-width="2.2" stroke-linecap="round"/>
<circle cx="98.6" cy="14.3" r="4.9" fill="#fff" stroke="#000" stroke-width="1.5"/>
<g stroke="#800000" stroke-width="1" fill="#800000" shape-rendering="crispEdges">
<line x1="98.5" y1="10" x2="98.5" y2="19"/><line x1="94" y1="14.5" x2="103" y2="14.5"/>
<rect x="97" y="11" width="3" height="1" stroke="none"/><rect x="97" y="17" width="3" height="1" stroke="none"/>
<rect x="95" y="13" width="1" height="3" stroke="none"/><rect x="101" y="13" width="1" height="3" stroke="none"/>
</g>
<!-- hand (disabled) -->
<g fill="none" stroke-width="1" stroke-linejoin="round" stroke-linecap="round">
<path id="hand" d="M120.5 17.5 L117.5 14.5 Q116.5 13 118 13.2 L120.5 15 V9.5 Q121.3 8 122.3 9.5 V13.5 V8.3 Q123.3 7 124.3 8.3 V13.5 V9 Q125.3 7.8 126.3 9 V14 V11 Q127.3 10 128.2 11 V17 Q128.2 19 127 20.5 V21.5 H122 L120.5 17.5" stroke="#fff" transform="translate(1,1)"/>
<path d="M120.5 17.5 L117.5 14.5 Q116.5 13 118 13.2 L120.5 15 V9.5 Q121.3 8 122.3 9.5 V13.5 V8.3 Q123.3 7 124.3 8.3 V13.5 V9 Q125.3 7.8 126.3 9 V14 V11 Q127.3 10 128.2 11 V17 Q128.2 19 127 20.5 V21.5 H122 L120.5 17.5" stroke="#aca899"/>
</g>
<!-- printer -->
<path d="M183 15.2 L185 14 H195.3 V22 H185 L183 20.6 Z" fill="#000"/>
<path d="M195.3 14 L197.5 11.5 L199 12.5 V18 L195.3 22 Z" fill="#6a6a6a"/>
<path d="M195.3 14 L197.5 11.5 L199 12.5 V18 L195.3 22" fill="none" stroke="#000" stroke-width="0.8"/>
<rect x="184.6" y="15" width="9.6" height="1" fill="#d4d4d4"/>
<rect x="184" y="17" width="10.6" height="2.2" fill="#dedede"/>
<rect x="185" y="20" width="9.2" height="1" fill="#d4d4d4"/>
<path d="M188.2 8.5 H197 L195 13.8 H186 Z" fill="#fff" stroke="#000" stroke-width="1"/>
<path d="M189.3 10.6 H194.8 M188.3 12.3 H193.8" fill="none" stroke="#000" stroke-width="1"/>
<rect x="189.8" y="17.6" width="1.2" height="1.4" fill="#0000ff"/>
<rect x="191" y="17.6" width="1.2" height="1.4" fill="#ff0000"/>
<rect x="192.2" y="17.6" width="1.2" height="1.4" fill="#00c000"/>
</svg>
</body></html>
